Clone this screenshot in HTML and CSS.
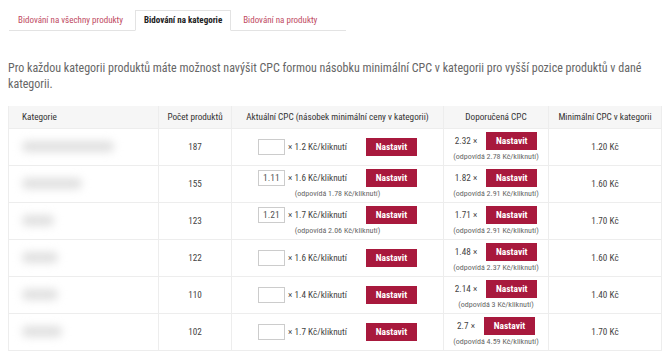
FILE: index.html
```html
<!DOCTYPE html>
<html lang="cs">
<head>
    <meta charset="UTF-8">
    <title>Bidování na kategorie</title>
    <link rel="stylesheet" href="styles.css">
</head>
<body>
    <ul class="tabs">
        <li><a href="#">Bidování na všechny produkty</a></li>
        <li class="active"><a href="#">Bidování na kategorie</a></li>
        <li><a href="#">Bidování na produkty</a></li>
    </ul>

    <p class="intro">Pro každou kategorii produktů máte možnost navýšit CPC formou násobku minimální CPC v kategorii pro vyšší pozice produktů v dané kategorii.</p>

    <table class="bids">
        <tr>
            <th class="name">Kategorie</th>
            <th>Počet produktů</th>
            <th>Aktuální CPC (násobek minimální ceny v kategorii)</th>
            <th>Doporučená CPC</th>
            <th>Minimální CPC v kategorii</th>
        </tr>
        <tr>
            <td class="name"><span class="blur" style="width: 92px"></span></td>
            <td>187</td>
            <td>
                <div class="line"><input type="text" value=""><span class="mult">× 1.2 Kč/kliknutí</span><button>Nastavit</button></div>
            </td>
            <td>
                <div class="line"><span class="rec">2.32 ×</span><button>Nastavit</button></div>
                <div class="note">(odpovídá 2.78 Kč/kliknutí)</div>
            </td>
            <td>1.20 Kč</td>
        </tr>
        <tr>
            <td class="name"><span class="blur" style="width: 60px"></span></td>
            <td>155</td>
            <td>
                <div class="line"><input type="text" value="1.11"><span class="mult">× 1.6 Kč/kliknutí</span><button>Nastavit</button></div>
                <div class="note">(odpovídá 1.78 Kč/kliknutí)</div>
            </td>
            <td>
                <div class="line"><span class="rec">1.82 ×</span><button>Nastavit</button></div>
                <div class="note">(odpovídá 2.91 Kč/kliknutí)</div>
            </td>
            <td>1.60 Kč</td>
        </tr>
        <tr>
            <td class="name"><span class="blur" style="width: 32px"></span></td>
            <td>123</td>
            <td>
                <div class="line"><input type="text" value="1.21"><span class="mult">× 1.7 Kč/kliknutí</span><button>Nastavit</button></div>
                <div class="note">(odpovídá 2.06 Kč/kliknutí)</div>
            </td>
            <td>
                <div class="line"><span class="rec">1.71 ×</span><button>Nastavit</button></div>
                <div class="note">(odpovídá 2.91 Kč/kliknutí)</div>
            </td>
            <td>1.70 Kč</td>
        </tr>
        <tr>
            <td class="name"><span class="blur" style="width: 36px"></span></td>
            <td>122</td>
            <td>
                <div class="line"><input type="text" value=""><span class="mult">× 1.6 Kč/kliknutí</span><button>Nastavit</button></div>
            </td>
            <td>
                <div class="line"><span class="rec">1.48 ×</span><button>Nastavit</button></div>
                <div class="note">(odpovídá 2.37 Kč/kliknutí)</div>
            </td>
            <td>1.60 Kč</td>
        </tr>
        <tr>
            <td class="name"><span class="blur" style="width: 36px"></span></td>
            <td>110</td>
            <td>
                <div class="line"><input type="text" value=""><span class="mult">× 1.4 Kč/kliknutí</span><button>Nastavit</button></div>
            </td>
            <td>
                <div class="line"><span class="rec">2.14 ×</span><button>Nastavit</button></div>
                <div class="note">(odpovídá 3 Kč/kliknutí)</div>
            </td>
            <td>1.40 Kč</td>
        </tr>
        <tr>
            <td class="name"><span class="blur" style="width: 40px"></span></td>
            <td>102</td>
            <td>
                <div class="line"><input type="text" value=""><span class="mult">× 1.7 Kč/kliknutí</span><button>Nastavit</button></div>
            </td>
            <td>
                <div class="line"><span class="rec">2.7 ×</span><button>Nastavit</button></div>
                <div class="note">(odpovídá 4.59 Kč/kliknutí)</div>
            </td>
            <td>1.70 Kč</td>
        </tr>
    </table>
</body>
</html>
```
FILE: styles.css
```css
body {
    margin: 10px 8px;
    font-family: "Roboto Condensed", Roboto, sans-serif;
    color: #555;
    background: #fff;
}
.tabs {
    display: flex;
    list-style: none;
    margin: 0 0 0 1px;
    padding: 0;
    width: 337px;
    border-bottom: 1px solid #e3e3e3;
}
.tabs li {
    margin-bottom: -1px;
    margin-right: 3px;
}
.tabs a {
    display: block;
    height: 19px;
    line-height: 19px;
    padding: 0 8px;
    font-size: 9px;
    color: #c04a62;
    text-decoration: none;
    border: 1px solid transparent;
}
.tabs .active a {
    color: #222;
    font-weight: bold;
    background: #fff;
    border-color: #e3e3e3 #e3e3e3 #fff;
}
.intro {
    margin: 29px 0 14px;
    font-size: 12px;
    line-height: 16px;
    color: #666;
}
.bids {
    width: 100%;
    table-layout: fixed;
    border-collapse: collapse;
    font-size: 9.2px;
}
.bids th {
    box-sizing: border-box;
    height: 22px;
    padding: 0 6px;
    font-weight: normal;
    color: #333;
    background: #f6f6f6;
    border-left: 1px solid #ededed;
    border-right: 1px solid #ededed;
}
.bids th:nth-child(1) { width: 150px; }
.bids th:nth-child(2) { width: 73px; }
.bids th:nth-child(3) { width: 212px; }
.bids th:nth-child(4) { width: 105px; }
.bids td {
    height: 30px;
    padding: 3px 4px;
    text-align: center;
    color: #444;
    border: 1px solid #ededed;
}
.bids .name {
    text-align: left;
    padding-left: 13px;
}
.blur {
    display: block;
    height: 11px;
    background: #e0e0e0;
    border-radius: 5px;
    filter: blur(4px);
}
.line {
    display: flex;
    justify-content: center;
    align-items: center;
}
.line input {
    width: 27px;
    height: 16px;
    box-sizing: border-box;
    border: 1px solid #ccc;
    padding: 0 4px;
    margin: 0 3px 0 0;
    font: 9.5px "Roboto Condensed", Roboto, sans-serif;
    color: #555;
}
.mult {
    margin-right: 19px;
}
.rec {
    margin-right: 9px;
}
button {
    width: 51px;
    height: 18px;
    padding: 0;
    border: none;
    background: #a8193d;
    color: #fff;
    font: bold 9.5px "Roboto Condensed", Roboto, sans-serif;
    cursor: pointer;
}
.note {
    margin-top: 1px;
    font-size: 8px;
    line-height: 11px;
    color: #666;
}
```
